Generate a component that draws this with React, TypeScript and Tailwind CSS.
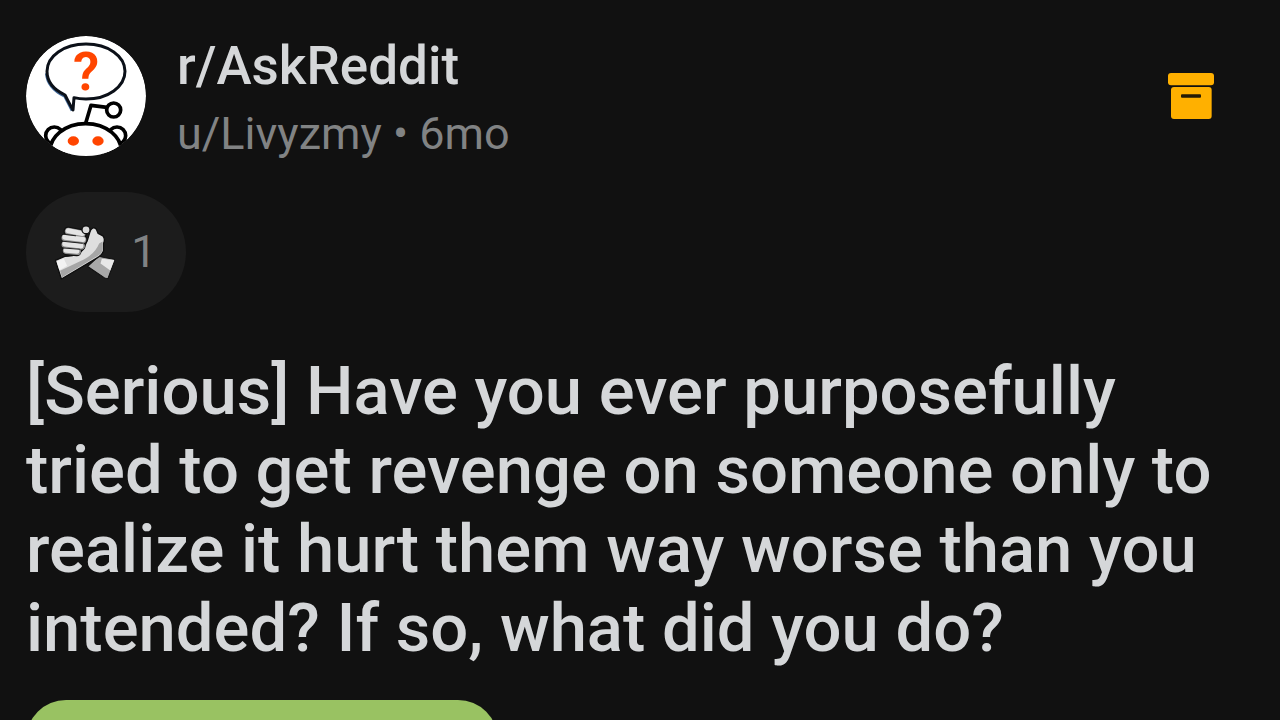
import React from 'react';

interface Post {
  subreddit: string;
  author: string;
  age: string;
  awards: number;
  title: string;
}

const post: Post = {
  subreddit: 'r/AskReddit',
  author: 'u/Livyzmy',
  age: '6mo',
  awards: 1,
  title:
    '[Serious] Have you ever purposefully tried to get revenge on someone only to realize it hurt them way worse than you intended? If so, what did you do?',
};

const SubredditAvatar: React.FC = () => (
  <svg viewBox="30 28 360 360" className="w-[120px] h-[120px] shrink-0 rounded-full" aria-hidden="true">
    <circle cx="210" cy="208" r="180" fill="#fff" />
    {/* Speech bubble */}
    <path
      d="M91 140C93 172 118 195 146 209Q157 230 168 252"
      fill="none"
      stroke="#3f6797"
      strokeWidth="8"
    />
    <path
      d="M174 213C186 216 198 217 210 217C276 217 327 180 327 134C327 88 276 52 210 52C144 52 93 88 93 134C93 166 115 190 147 205C155 220 163 236 171 250Z"
      fill="#fff"
      stroke="#0b1018"
      strokeWidth="9"
      strokeLinejoin="round"
    />
    <text
      x="210"
      y="190"
      textAnchor="middle"
      fill="#ff4500"
      fontSize="160"
      fontWeight="600"
      fontFamily="Roboto, sans-serif"
    >
      ?
    </text>
    {/* Snoo */}
    <g fill="#fff" stroke="#000" strokeWidth="11">
      <path d="M209 290L225 236L273 242" fill="none" strokeLinejoin="round" />
      <circle cx="293" cy="250" r="21" />
      <circle cx="115" cy="327" r="26" />
      <circle cx="303" cy="327" r="26" />
      <path d="M104 384C94 330 150 291 209 291C268 291 324 330 314 384Z" />
    </g>
    <path d="M112 352Q209 330 306 352L290 400H130Z" fill="#fff" />
    <ellipse cx="172" cy="343" rx="17" ry="14" fill="#ff4500" />
    <ellipse cx="246" cy="343" rx="17" ry="14" fill="#ff4500" />
  </svg>
);

const HandshakeAward: React.FC = () => (
  <svg viewBox="31 29 178 163" className="w-[60px] h-[55px] shrink-0" aria-hidden="true">
    {/* Far sleeve */}
    <path d="M128 152L160 122L209 131L188 188L178 186Z" fill="#a8a8a8" stroke="#0e0e0e" strokeWidth="3" strokeLinejoin="round" />
    <path d="M170 129L207 133L195 164L166 143Z" fill="#e8e8e8" />
    {/* Near arm and thumb */}
    <path
      d="M32 134L60 122C84 122 104 114 114 102L127 74L136 45Q144 31 154 42L159 54L173 61Q181 70 175 84L175 106Q168 122 150 130L50 189Z"
      fill="#dedede"
      stroke="#0e0e0e"
      strokeWidth="4"
      strokeLinejoin="round"
    />
    <path d="M46 165L107 136C137 122 153 105 162 84L172 78L172 105Q166 118 148 126L52 184Z" fill="#a6a6a6" />
    <path d="M36 137L57 128L67 150L44 163Z" fill="#f2f2f2" />
    {/* Fingers */}
    <g fill="none" strokeLinecap="round">
      <g stroke="#0e0e0e" strokeWidth="27">
        <path d="M70 47L112 55" />
        <path d="M62 67L114 73" />
        <path d="M62 87L108 92" />
        <path d="M66 105L96 108" />
      </g>
      <g stroke="#8c8c8c" strokeWidth="20">
        <path d="M70 47L112 55" />
        <path d="M60 67L114 73" />
        <path d="M60 87L110 92" />
        <path d="M64 105L98 108" />
      </g>
      <g stroke="#e4e4e4" strokeWidth="15">
        <path d="M70 46L112 54" />
        <path d="M60 65L114 72" />
        <path d="M60 85L108 91" />
        <path d="M64 104L96 107" />
      </g>
      <g stroke="#222222" strokeWidth="3">
        <path d="M56 56L92 61" />
        <path d="M54 77L112 83" />
        <path d="M56 97L104 101" />
      </g>
    </g>
    <circle cx="123" cy="43" r="12" fill="#dadada" stroke="#111" strokeWidth="4" />
  </svg>
);

const ArchiveIcon: React.FC = () => (
  <svg viewBox="54 38 138 138" className="w-[46px] h-[46px]" aria-hidden="true">
    <rect x="54" y="38" width="138" height="37" rx="9" fill="#ffb000" />
    <rect x="63" y="80" width="122" height="96" rx="9" fill="#ffb000" />
    <rect x="93" y="102" width="60" height="10" rx="3" fill="#241a05" />
  </svg>
);

export default function App() {
  return (
    <main className="min-h-screen bg-[#111111] px-[26px] pt-9 font-['Roboto',sans-serif]">
      <article>
        <header className="flex items-start">
          <SubredditAvatar />
          <div className="ml-[31px] flex-1 min-w-0">
            <a href="#subreddit" className="block text-[53px] leading-[60px] font-medium text-[#d5d7d9]">
              {post.subreddit}
            </a>
            <p className="mt-2 text-[45px] leading-[60px] text-[#818384]">
              <a href="#author">{post.author}</a> • {post.age}
            </p>
          </div>
          <button type="button" aria-label="Archived post" className="h-[120px] pr-10 flex items-center">
            <ArchiveIcon />
          </button>
        </header>

        <button
          type="button"
          aria-label={`${post.awards} award`}
          className="mt-7 h-[120px] w-40 rounded-full bg-[#1c1c1c] flex items-center justify-center gap-4"
        >
          <HandshakeAward />
          <span className="text-[45px] leading-[60px] text-[#818384]">{post.awards}</span>
        </button>

        <h1 className="mt-10 text-[67px] leading-[79px] font-medium text-[#d5d7d9]">{post.title}</h1>

        {/* Flair */}
        <a
          href="#flair"
          aria-label="Post flair"
          className="mt-8 block h-20 w-[472px] max-w-full rounded-full bg-[#99c262]"
        />
      </article>
    </main>
  );
}
